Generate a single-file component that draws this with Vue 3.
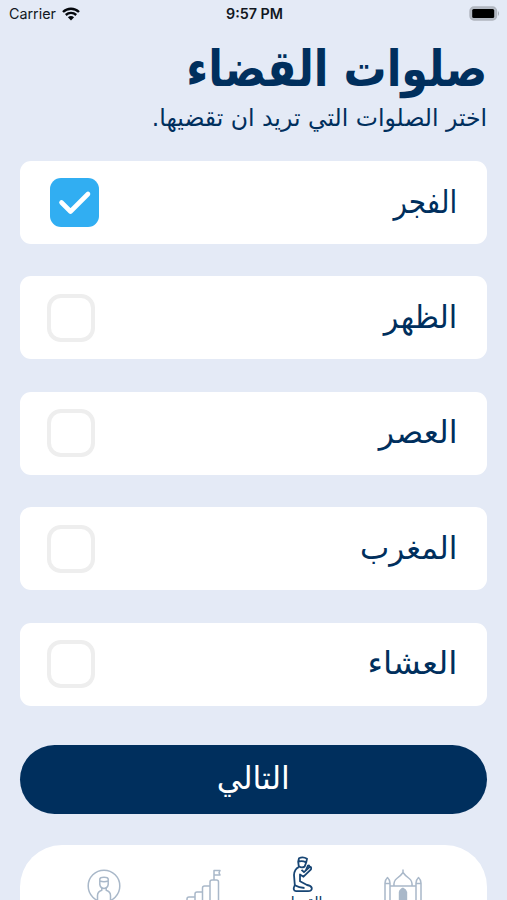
<script setup>
import { ref } from 'vue';

const prayers = ref([
  { id: 'fajr', name: 'الفجر', checked: true },
  { id: 'dhuhr', name: 'الظهر', checked: false },
  { id: 'asr', name: 'العصر', checked: false },
  { id: 'maghrib', name: 'المغرب', checked: false },
  { id: 'isha', name: 'العشاء', checked: false },
]);

const togglePrayer = (prayer) => {
  prayer.checked = !prayer.checked;
};
</script>

<template>
  <div class="screen" dir="rtl">
    <!-- Status bar -->
    <div class="status-bar" dir="ltr">
      <div class="carrier">
        <span>Carrier</span>
        <svg class="wifi" viewBox="0 0 18 14">
          <path d="M1 5 C5.5 0.7 12.5 0.7 17 5" />
          <path d="M3.8 8 C6.8 5.2 11.2 5.2 14.2 8" />
          <path class="dot" d="M5.9 10.2 Q9 7.6 12.1 10.2 L9 13.4 Z" />
        </svg>
      </div>
      <div class="time">9:57 PM</div>
      <div class="battery">
        <svg viewBox="0 0 31 16">
          <rect x="1" y="1" width="26.5" height="13" rx="4" fill="#b4bac4" stroke="#b0b5be" stroke-width="1.4" />
          <rect x="3.2" y="3" width="22" height="9" rx="1.5" fill="#000" />
          <path d="M29 5 Q31 7.5 29 10 Z" fill="#a5abb4" />
        </svg>
      </div>
    </div>

    <header class="header">
      <h1><span>صلوات القضاء</span></h1>
      <p><span>اختر الصلوات التي تريد ان تقضيها.</span></p>
    </header>

    <!-- Prayers -->
    <main class="prayers">
      <div
        v-for="prayer in prayers"
        :key="prayer.id"
        class="prayer"
        @click="togglePrayer(prayer)"
      >
        <span class="name" :class="prayer.id">{{ prayer.name }}</span>
        <span class="checkbox" :class="{ checked: prayer.checked }">
          <svg v-if="prayer.checked" viewBox="0 0 49 49">
            <path d="M11.5 24.5 L20.5 33.5 L38 16" />
          </svg>
        </span>
      </div>
    </main>

    <button class="next"><span>التالي</span></button>

    <!-- Tab bar -->
    <nav class="tabs">
      <div class="tab">
        <svg class="mosque" viewBox="0 0 40 44">
          <path d="M20 1.5 V4.5 Q18 7.5 13.8 10.5 Q10.5 13 11 18 M20 4.5 Q22 7.5 26.2 10.5 Q29.5 13 29 18 M7 18 H33" />
          <path d="M2 44 V15 Q2.3 11.5 4.5 9.5 Q6.7 11.5 7 15 V44 M2 15.5 H7" />
          <path d="M33 44 V15 Q33.3 11.5 35.5 9.5 Q37.7 11.5 38 15 V44 M33 15.5 H38" />
          <path class="fill" d="M15.8 44 V24 Q16.4 21 20 19.5 Q23.6 21 24.2 24 V44 Z" />
        </svg>
      </div>
      <div class="tab active">
        <svg class="praying" viewBox="0 0 22 37">
          <path d="M7 2.3 Q11 0.3 15 2.8 L14.2 6.5 Q10 4.2 6.2 5.8 Z M6.2 5.8 L6.8 10.3 Q9.5 12.3 12.6 10.6 L14.2 6.5" />
          <path d="M6.8 11.2 Q2.5 13 2 19 L2.8 29 Q0.2 34.8 4 35.2 H16 Q20 35.2 19.8 32 Q19 29.5 15 29 L8 25.2 V18.5 L11.5 20.7 L19 13.3 Q19.8 10.2 17.5 11.2 L12 16.2 L9.5 13.8" />
          <path d="M14 14 L15.8 9.8 Q17.4 8.4 17.5 11 M2.8 29.3 Q7 31.8 12.5 32" />
        </svg>
        <span>القضاء</span>
      </div>
      <div class="tab">
        <svg class="progress" viewBox="0 0 35 44">
          <path d="M1 44 V31 Q1 29 3 29 H9 M9 44 V26 Q9 24 11 24 H16.5 M16.5 44 V20 Q16.5 18 18.5 18 H24" />
          <path d="M24 44 V14 Q24 12 26 12 H30.5 Q32.5 12 32.5 14 V44 M28 12 V2.5 H34 L33 4.7 L34 7 H28" />
        </svg>
      </div>
      <div class="tab">
        <svg class="profile" viewBox="0 0 34 44">
          <circle cx="17" cy="18" r="15.8" />
          <path d="M12.8 13 V11 Q13.2 9.3 17 9.3 Q20.8 9.3 21.2 11 V16.5 Q20.5 20.3 17 20.5 Q13.5 20.3 12.8 16.5 V13 Q17 14.5 21.2 13" />
          <path d="M14.8 20 V22.2 Q10.5 23.5 10.5 27.5 V32 M19.2 20 V22.2 Q23.5 23.5 23.5 27.5 V32" />
        </svg>
      </div>
    </nav>
  </div>
</template>

<style>
body {
  background: #e4eaf6;
}
</style>

<style scoped>
.screen {
  height: 900px;
  overflow: hidden;
  box-sizing: border-box;
  padding: 0 20px;
  background: #e4eaf6;
  color: #002f5d;
  font-family: "DejaVu Sans", sans-serif;
}

.status-bar {
  display: grid;
  grid-template-columns: 1fr auto 1fr;
  align-items: center;
  height: 27px;
  margin: 0 -13px 0 -11px;
  font: 14.3px Inter, sans-serif;
  color: #111722;
}

.carrier {
  display: flex;
  align-items: center;
  gap: 6px;
}

.wifi {
  width: 18px;
  height: 14px;
  fill: none;
  stroke: #05080d;
  stroke-width: 2.4;
}

.wifi .dot {
  fill: #05080d;
  stroke: none;
}

.time {
  font-weight: 600;
}

.battery {
  display: flex;
  justify-content: flex-end;
}

.battery svg {
  width: 31px;
  height: 16px;
}

.header {
  height: 134px;
}

h1,
p {
  margin: 0;
  white-space: nowrap;
}

h1 span,
p span,
.name,
.next span {
  display: inline-block;
  transform-origin: right center;
}

h1 {
  padding-top: 11px;
  font-size: 48px;
  line-height: 60px;
}

h1 span {
  transform: scale(0.895, 1.04);
}

p {
  padding-top: 3px;
  font-size: 24px;
  line-height: 34px;
}

p span {
  transform: scaleX(0.98);
}

.prayers {
  display: flex;
  flex-direction: column;
  gap: 32.4px;
}

.prayer {
  display: flex;
  align-items: center;
  justify-content: space-between;
  box-sizing: border-box;
  height: 83px;
  padding: 0 30px 0 27px;
  border-radius: 11px;
  background: #fff;
  cursor: pointer;
}

.name {
  padding-bottom: 2px;
  font-size: 32px;
  line-height: 50px;
}

.fajr {
  transform: scaleX(0.87);
}

.dhuhr {
  transform: scaleX(0.95);
}

.asr {
  transform: scaleX(0.99);
}

.maghrib {
  transform: scaleX(0.97);
}

.isha {
  transform: scaleX(1.03);
}

.checkbox {
  box-sizing: border-box;
  width: 48px;
  height: 48px;
  border: 4.5px solid #eeeeee;
  border-radius: 14px;
}

.checkbox.checked {
  width: 49px;
  height: 49px;
  margin-left: 3px;
  border: none;
  border-radius: 11px;
  background: #31aef2;
}

.checkbox svg {
  display: block;
  fill: none;
  stroke: #fff;
  stroke-width: 4.6;
  stroke-linecap: round;
  stroke-linejoin: round;
}

.next {
  display: block;
  width: 100%;
  height: 69px;
  margin-top: 39.5px;
  padding: 0 0 3px;
  border: none;
  border-radius: 35px;
  background: #002f5d;
  color: #fff;
  font-family: inherit;
  font-size: 32px;
  cursor: pointer;
}

.next span {
  transform: scaleX(0.98);
  transform-origin: center;
}

.tabs {
  display: flex;
  justify-content: space-between;
  box-sizing: border-box;
  height: 100px;
  margin-top: 31px;
  padding: 0 64px;
  border-radius: 42px 42px 0 0;
  background: #fff;
}

.tab {
  display: flex;
  flex-direction: column;
  align-items: center;
  width: 40px;
  padding-top: 23px;
}

.tab.active {
  padding-top: 11px;
}

.tab span {
  margin-top: -1px;
  font-size: 14px;
  line-height: 20px;
}

.tab svg {
  flex-shrink: 0;
  fill: none;
  stroke: #a9b8c9;
  stroke-width: 1.5;
  stroke-linejoin: round;
}

.tab.active svg {
  stroke: #174574;
  stroke-width: 1.8;
}

.tab svg .fill {
  fill: #a9b8c9;
  stroke: none;
}

.mosque {
  width: 40px;
  height: 44px;
}

.progress {
  width: 35px;
  height: 44px;
}

.profile {
  width: 34px;
  height: 44px;
}

.praying {
  width: 22px;
  height: 37px;
}
</style>
